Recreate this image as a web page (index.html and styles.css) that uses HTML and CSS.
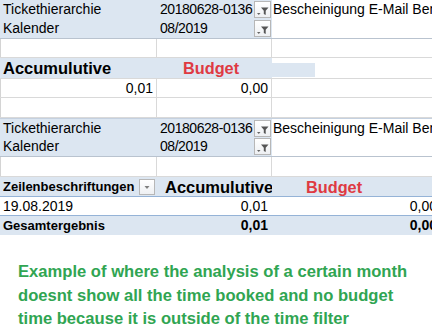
FILE: index.html
```html
<!DOCTYPE html>
<html>
<head>
<meta charset="utf-8">
<link rel="stylesheet" href="styles.css">
</head>
<body>
<div class="sheet">
  <div class="row r19 blue2">
    <div class="cell a">Tickethierarchie</div>
    <div class="cell b flt"><span class="txt">20180628-0136 ,</span><span class="fbtn"><svg width="15" height="15" viewBox="0 0 15 15"><path d="M6 5.5h7.5l-2.8 3.2v4.3l-1.9-1v-3.3z" fill="#555"/><path d="M2 11h3.5l-1.75 2z" fill="#666"/></svg></span></div>
    <div class="cell c white">Bescheinigung E-Mail Benachrichtigung</div>
  </div>
  <div class="row r20 blue2 bline">
    <div class="cell a">Kalender</div>
    <div class="cell b flt"><span class="txt">08/2019</span><span class="fbtn"><svg width="15" height="15" viewBox="0 0 15 15"><path d="M6 5.5h7.5l-2.8 3.2v4.3l-1.9-1v-3.3z" fill="#555"/><path d="M2 11h3.5l-1.75 2z" fill="#666"/></svg></span></div>
    <div class="cell c white"></div>
  </div>
  <div class="row r19 grid">
    <div class="cell a"></div><div class="cell b"></div><div class="cell c"></div>
  </div>
  <div class="row r20 big">
    <div class="cell a blue">Accumulutive</div>
    <div class="cell b blue"><span class="red pad-budget">Budget</span></div>
    <div class="cell c"><span class="blueblock"></span></div>
  </div>
  <div class="row r20 grid gtop">
    <div class="cell a num">0,01</div><div class="cell b num">0,00</div><div class="cell c"></div>
  </div>
  <div class="row r20 grid">
    <div class="cell a"></div><div class="cell b"></div><div class="cell c"></div>
  </div>
  <div class="row r19 blue2 btop">
    <div class="cell a">Tickethierarchie</div>
    <div class="cell b flt"><span class="txt">20180628-0136 ,</span><span class="fbtn"><svg width="15" height="15" viewBox="0 0 15 15"><path d="M6 5.5h7.5l-2.8 3.2v4.3l-1.9-1v-3.3z" fill="#555"/><path d="M2 11h3.5l-1.75 2z" fill="#666"/></svg></span></div>
    <div class="cell c white">Bescheinigung E-Mail Benachrichtigung</div>
  </div>
  <div class="row r20 blue2 bline">
    <div class="cell a">Kalender</div>
    <div class="cell b flt"><span class="txt">08/2019</span><span class="fbtn"><svg width="15" height="15" viewBox="0 0 15 15"><path d="M6 5.5h7.5l-2.8 3.2v4.3l-1.9-1v-3.3z" fill="#555"/><path d="M2 11h3.5l-1.75 2z" fill="#666"/></svg></span></div>
    <div class="cell c white"></div>
  </div>
  <div class="row r20 grid">
    <div class="cell a"></div><div class="cell b"></div><div class="cell c"></div>
  </div>
  <div class="row r20 pivhead">
    <div class="cell a flt"><span class="txt hdr">Zeilenbeschriftungen</span><span class="dbtn"><svg width="14" height="14" viewBox="0 0 14 14"><path d="M4.5 6h5l-2.5 3z" fill="#7f7f7f"/></svg></span></div>
    <div class="cell b big"><span class="pad-acc">Accumulutive</span></div>
    <div class="cell c big"><span class="red pad-budget2">Budget</span></div>
  </div>
  <div class="row r19 pivrow">
    <div class="cell a">19.08.2019</div>
    <div class="cell b num">0,01</div>
    <div class="cell c num">0,00</div>
  </div>
  <div class="row r19 pivtotal">
    <div class="cell a">Gesamtergebnis</div>
    <div class="cell b num">0,01</div>
    <div class="cell c num">0,00</div>
  </div>
</div>
<p class="note">Example of where the analysis of a certain month doesnt show all the time booked and no budget time because it is outside of the time filter</p>
</body>
</html>
```

FILE: styles.css
```css
html, body {
  margin: 0;
  padding: 0;
  background: #ffffff;
}
body {
  width: 432px;
  height: 330px;
  overflow: hidden;
  font-family: "Liberation Sans", Arial, sans-serif;
  font-size: 14px;
  color: #000;
}
.sheet {
  width: 432px;
  overflow: hidden;
}
.row {
  display: flex;
  box-sizing: border-box;
  width: 440px;
}
.r19 { height: 19px; }
.r20 { height: 20px; }
.cell {
  box-sizing: border-box;
  height: 100%;
  line-height: 19px;
  padding: 0 3px;
  white-space: nowrap;
  overflow: hidden;
}
.a { width: 157px; flex: none; }
.b { width: 115px; flex: none; }
.c { flex: 1; }
.blue2 { background: #dce6f1; }
.blue { background: #dce6f1; }
.white { background: #ffffff; padding-left: 1px; }
.bline { border-bottom: 1px solid #b9c3cf; }
.btop { border-top: 1px solid #c5d1e0; }
.grid .cell { border-right: 1px solid #d9d9d9; }
.grid { border-bottom: 1px solid #d9d9d9; }
.grid .a { border-left: 1px solid #d4d4d4; }
.gtop { border-top: 1px solid #d9d9d9; }
.flt {
  display: flex;
  align-items: center;
  padding-right: 1px;
}
.flt .txt {
  flex: 1;
  overflow: hidden;
  min-width: 0;
  letter-spacing: -0.45px;
}
.fbtn {
  flex: none;
  box-sizing: border-box;
  width: 17px;
  height: 17px;
  border: 1px solid #b7b7b7;
  background: linear-gradient(#ffffff, #eef0f3);
  display: flex;
  align-items: center;
  justify-content: center;
}
.dbtn {
  flex: none;
  box-sizing: border-box;
  width: 16px;
  height: 16px;
  margin-right: 1px;
  border: 1px solid #b7b7b7;
  background: linear-gradient(#ffffff, #eef0f3);
  display: flex;
  align-items: center;
  justify-content: center;
}
.big {
  font-weight: bold;
  font-size: 16.5px;
}
.row.big .cell, .pivhead .big { line-height: 20px; }
.red { color: #df3a42; font-size: 16.3px; }
.pad-budget { padding-left: 23px; }
.pad-budget2 { padding-left: 31px; }
.pad-acc { padding-left: 5px; }
.blueblock {
  display: block;
  width: 43px;
  height: 14px;
  margin: 5px 0 0 -3px;
  background: #dce6f1;
}
.num { text-align: right; }
.pivhead {
  background: #dce6f1;
  border-bottom: 1px solid #95b3d7;
}
.pivhead .txt.hdr {
  font-weight: bold;
  font-size: 13px;
  letter-spacing: 0;
}
.pivrow {
  border-bottom: 1px solid #95b3d7;
}
.pivrow .b.num { padding-right: 4px; }
.pivtotal {
  background: #dce6f1;
  font-weight: bold;
}
.pivtotal .a { font-size: 13px; }
.pivtotal .b.num { padding-right: 4px; }
.note {
  margin: 25px 0 0 18px;
  width: 412px;
  color: #30a552;
  font-weight: bold;
  font-size: 16.6px;
  line-height: 23.5px;
}
```
